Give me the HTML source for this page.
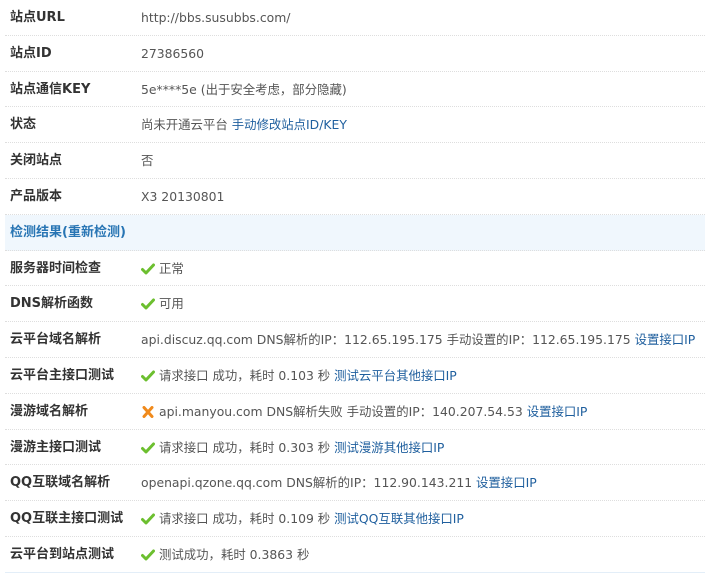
<!DOCTYPE html>
<html><head><meta charset="utf-8"><style>
body{margin:0;width:705px;height:575px;overflow:hidden;background:#fff;font-family:"DejaVu Sans","Noto Sans CJK SC",sans-serif;font-size:12.4px;color:#555}
.r{position:absolute;left:5px;width:700px;height:35.8px;border-bottom:1px dotted #dedede;box-sizing:border-box}
.l{position:absolute;left:5px;top:1px;line-height:34px;font-weight:bold;color:#333;font-size:13px}
.v{position:absolute;left:136px;top:1px;line-height:34px;white-space:nowrap}
.h{background:#f0f7fd}
.h .l{color:#2875b4}
a{color:#1f5f9e;text-decoration:none}
.ok,.x{display:inline-block;width:14px;height:12px;vertical-align:-2px;margin-right:4px}
</style></head><body>
<svg width="0" height="0" style="position:absolute"><defs>
<symbol id="ok" viewBox="0 0 14 12"><path d="M1.5 6.5 L5 10 L12.5 2" fill="none" stroke="#6cbf2f" stroke-width="3" stroke-linecap="round" stroke-linejoin="round"/></symbol>
<symbol id="x" viewBox="0 0 14 12"><path d="M3 1.5 L11 10.5 M11 1.5 L3 10.5" fill="none" stroke="#f08a1c" stroke-width="3" stroke-linecap="round"/></symbol>
</defs></svg>
<div class="r" style="top:0"><span class="l">站点URL</span><span class="v">http://bbs.susubbs.com/</span></div>
<div class="r" style="top:35.8px"><span class="l">站点ID</span><span class="v">27386560</span></div>
<div class="r" style="top:71.6px"><span class="l">站点通信KEY</span><span class="v">5e****5e (出于安全考虑，部分隐藏)</span></div>
<div class="r" style="top:107.4px"><span class="l">状态</span><span class="v">尚未开通云平台 <a>手动修改站点ID/KEY</a></span></div>
<div class="r" style="top:143.2px"><span class="l">关闭站点</span><span class="v">否</span></div>
<div class="r" style="top:179px"><span class="l">产品版本</span><span class="v">X3 20130801</span></div>
<div class="r h" style="top:214.8px"><span class="l">检测结果(重新检测)</span></div>
<div class="r" style="top:250.6px"><span class="l">服务器时间检查</span><span class="v"><svg class="ok"><use href="#ok"/></svg>正常</span></div>
<div class="r" style="top:286.4px"><span class="l">DNS解析函数</span><span class="v"><svg class="ok"><use href="#ok"/></svg>可用</span></div>
<div class="r" style="top:322.2px"><span class="l">云平台域名解析</span><span class="v">api.discuz.qq.com DNS解析的IP：112.65.195.175 手动设置的IP：112.65.195.175 <a>设置接口IP</a></span></div>
<div class="r" style="top:358px"><span class="l">云平台主接口测试</span><span class="v"><svg class="ok"><use href="#ok"/></svg>请求接口 成功，耗时 0.103 秒 <a>测试云平台其他接口IP</a></span></div>
<div class="r" style="top:393.8px"><span class="l">漫游域名解析</span><span class="v"><svg class="x"><use href="#x"/></svg>api.manyou.com DNS解析失败 手动设置的IP：140.207.54.53 <a>设置接口IP</a></span></div>
<div class="r" style="top:429.6px"><span class="l">漫游主接口测试</span><span class="v"><svg class="ok"><use href="#ok"/></svg>请求接口 成功，耗时 0.303 秒 <a>测试漫游其他接口IP</a></span></div>
<div class="r" style="top:465.4px"><span class="l">QQ互联域名解析</span><span class="v">openapi.qzone.qq.com DNS解析的IP：112.90.143.211 <a>设置接口IP</a></span></div>
<div class="r" style="top:501.2px"><span class="l">QQ互联主接口测试</span><span class="v"><svg class="ok"><use href="#ok"/></svg>请求接口 成功，耗时 0.109 秒 <a>测试QQ互联其他接口IP</a></span></div>
<div class="r" style="top:537px;border-bottom:1px solid #e3eef8"><span class="l">云平台到站点测试</span><span class="v"><svg class="ok"><use href="#ok"/></svg>测试成功，耗时 0.3863 秒</span></div>
</body></html>
